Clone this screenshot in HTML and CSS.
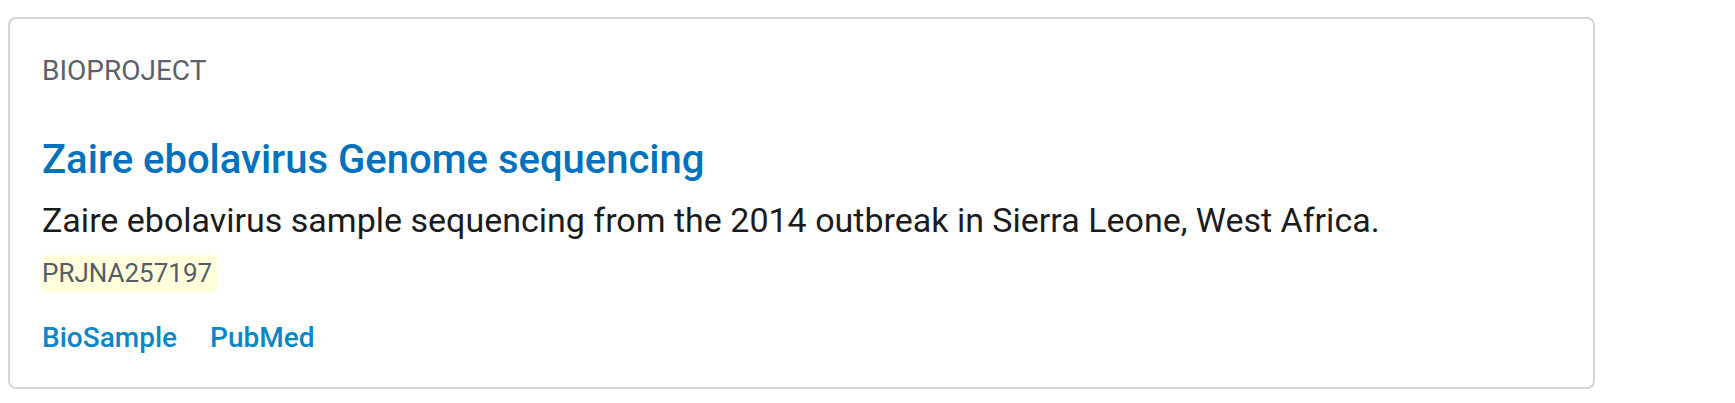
FILE: index.html
```html
<!DOCTYPE html>
<html lang="en">
<head>
    <meta charset="UTF-8">
    <title>BioProject</title>
    <link rel="stylesheet" href="styles.css">
</head>
<body>
    <div class="card">
        <div class="kind">BIOPROJECT</div>
        <a class="title" href="#">Zaire ebolavirus Genome sequencing</a>
        <p class="desc">Zaire ebolavirus sample sequencing from the 2014 outbreak in Sierra Leone, West Africa.</p>
        <div class="acc"><span class="mark">PRJNA257197</span></div>
        <div class="links">
            <a href="#">BioSample</a>
            <a href="#">PubMed</a>
        </div>
    </div>
</body>
</html>
```

FILE: styles.css
```css
/* reset */
* {
    margin: 0;
    padding: 0;
    box-sizing: border-box;
}

body {
    font-family: Roboto, 'Liberation Sans', sans-serif;
    background: #fff;
    padding: 17px 0 0 8px;
    width: 1595px;
}

.card {
    border: 2px solid #d6d6d6;
    border-radius: 8px;
    padding: 36px 32px 34px 32px;
    height: 372px;
}

.kind {
    font-size: 28px;
    line-height: 32px;
    color: #5b616b;
}

.title {
    display: block;
    margin-top: 50px;
    font-size: 40px;
    line-height: 46px;
    font-weight: 500;
    color: #0071bc;
    text-decoration: none;
}

.desc {
    margin-top: 16px;
    font-size: 34px;
    line-height: 42px;
    color: #1b1b1b;
}

.acc {
    margin-top: 14px;
    font-size: 26px;
    line-height: 37px;
    color: #565c65;
}

.mark {
    display: inline-block;
    background: #ffffdc;
    padding: 0 5px 0 0;
}

.links {
    margin-top: 30px;
    display: flex;
    gap: 33px;
    font-size: 28px;
    line-height: 32px;
}

.links a {
    color: #0a86c7;
    font-weight: 500;
    text-decoration: none;
}
```
